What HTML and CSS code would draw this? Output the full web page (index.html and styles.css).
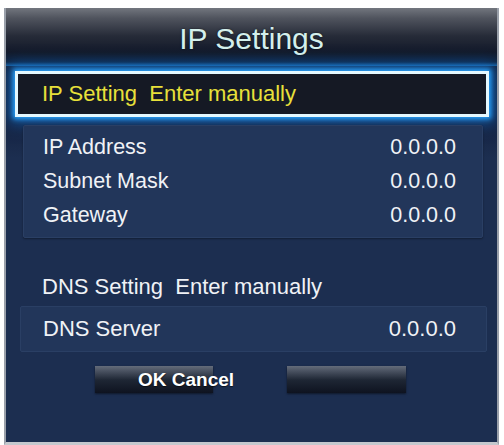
FILE: index.html
```html
<!DOCTYPE html>
<html>
<head>
<meta charset="utf-8">
<link rel="stylesheet" href="styles.css">
</head>
<body>
<div class="dialog">
  <div class="header">IP Settings</div>
  <div class="selected">IP Setting&nbsp; Enter manually</div>
  <div class="group">
    <div class="row"><span>IP Address</span><span>0.0.0.0</span></div>
    <div class="row"><span>Subnet Mask</span><span>0.0.0.0</span></div>
    <div class="row"><span>Gateway</span><span>0.0.0.0</span></div>
  </div>
  <div class="dns-label">DNS Setting&nbsp; Enter manually</div>
  <div class="dns-box"><span>DNS Server</span><span>0.0.0.0</span></div>
  <div class="buttons">
    <div class="btn btn-ok">OK Cancel</div>
    <div class="btn"></div>
  </div>
</div>
</body>
</html>
```
FILE: styles.css
```css
html, body {
  margin: 0;
  padding: 0;
  background: #ffffff;
}
body {
  font-family: "Liberation Sans", Arial, sans-serif;
}
.dialog {
  box-sizing: border-box;
  width: 495px;
  height: 437px;
  margin: 8px 0 0 4px;
  border-left: 2px solid #9aa0aa;
  border-right: 2px solid #9aa0aa;
  border-bottom: 3px solid #c4c8ce;
  background: linear-gradient(to bottom, #132038 0, #142240 110px, #1c2e50 150px, #1c2e50 100%);
  display: flex;
  flex-direction: column;
  overflow: hidden;
}
.header {
  height: 58px;
  flex: none;
  background: linear-gradient(to bottom, #72767e 0, #50545e 10px, #262b38 28px, #131a2a 44px, #0f2340 54px, #1a5f9e 58px);
  color: #d4f0ec;
  font-size: 30px;
  text-align: center;
  line-height: 62px;
  text-shadow: 0 0 2px rgba(0,0,0,0.6);
}
.selected {
  height: 46px;
  box-sizing: border-box;
  margin: 5px 8px 0 9px;
  border: 3px solid #e4f8ff;
  background: #151924;
  box-shadow: 0 0 5px 2px #2aa6ff, 0 0 14px 6px rgba(20, 120, 220, 0.6);
  color: #e8e03a;
  font-size: 22px;
  line-height: 40px;
  padding-left: 24px;
  white-space: nowrap;
}
.group {
  margin: 8px 14px 0 17px;
  height: 113px;
  box-sizing: border-box;
  padding: 4px 26px 7px 19px;
  background: #22365a;
  border: 1px solid #2a3f64;
  box-shadow: 0 1px 2px rgba(0,0,0,0.35);
  border-radius: 2px;
}
.row {
  display: flex;
  justify-content: space-between;
  height: 34px;
  line-height: 34px;
  font-size: 21.5px;
  color: #f0f2f6;
}
.dns-label {
  margin: 34px 0 0 36px;
  height: 30px;
  line-height: 30px;
  font-size: 22px;
  color: #f0f2f6;
  white-space: nowrap;
}
.dns-box {
  margin: 4px 10px 0 14px;
  height: 46px;
  box-sizing: border-box;
  display: flex;
  justify-content: space-between;
  padding: 0 30px 0 22px;
  line-height: 44px;
  font-size: 22px;
  color: #f0f2f6;
  background: #22365a;
  border: 1px solid #2a3f64;
  border-radius: 2px;
}
.buttons {
  display: flex;
  gap: 74px;
  margin-top: 14px;
  padding-left: 89px;
}
.btn {
  width: 118px;
  height: 27px;
  background: linear-gradient(to bottom, #646c7a 0, #454d5c 6px, #1e2634 14px, #0e1320 27px);
  box-shadow: 0 1px 2px rgba(0,0,0,0.5);
}
.btn:last-child {
  width: 119px;
}
.btn-ok {
  color: #ffffff;
  font-weight: bold;
  font-size: 19px;
  line-height: 27px;
  padding-left: 43px;
  box-sizing: border-box;
  white-space: nowrap;
  overflow: visible;
  text-shadow: 0 1px 1px rgba(0,0,0,0.6);
  position: relative;
  z-index: 1;
}
```
